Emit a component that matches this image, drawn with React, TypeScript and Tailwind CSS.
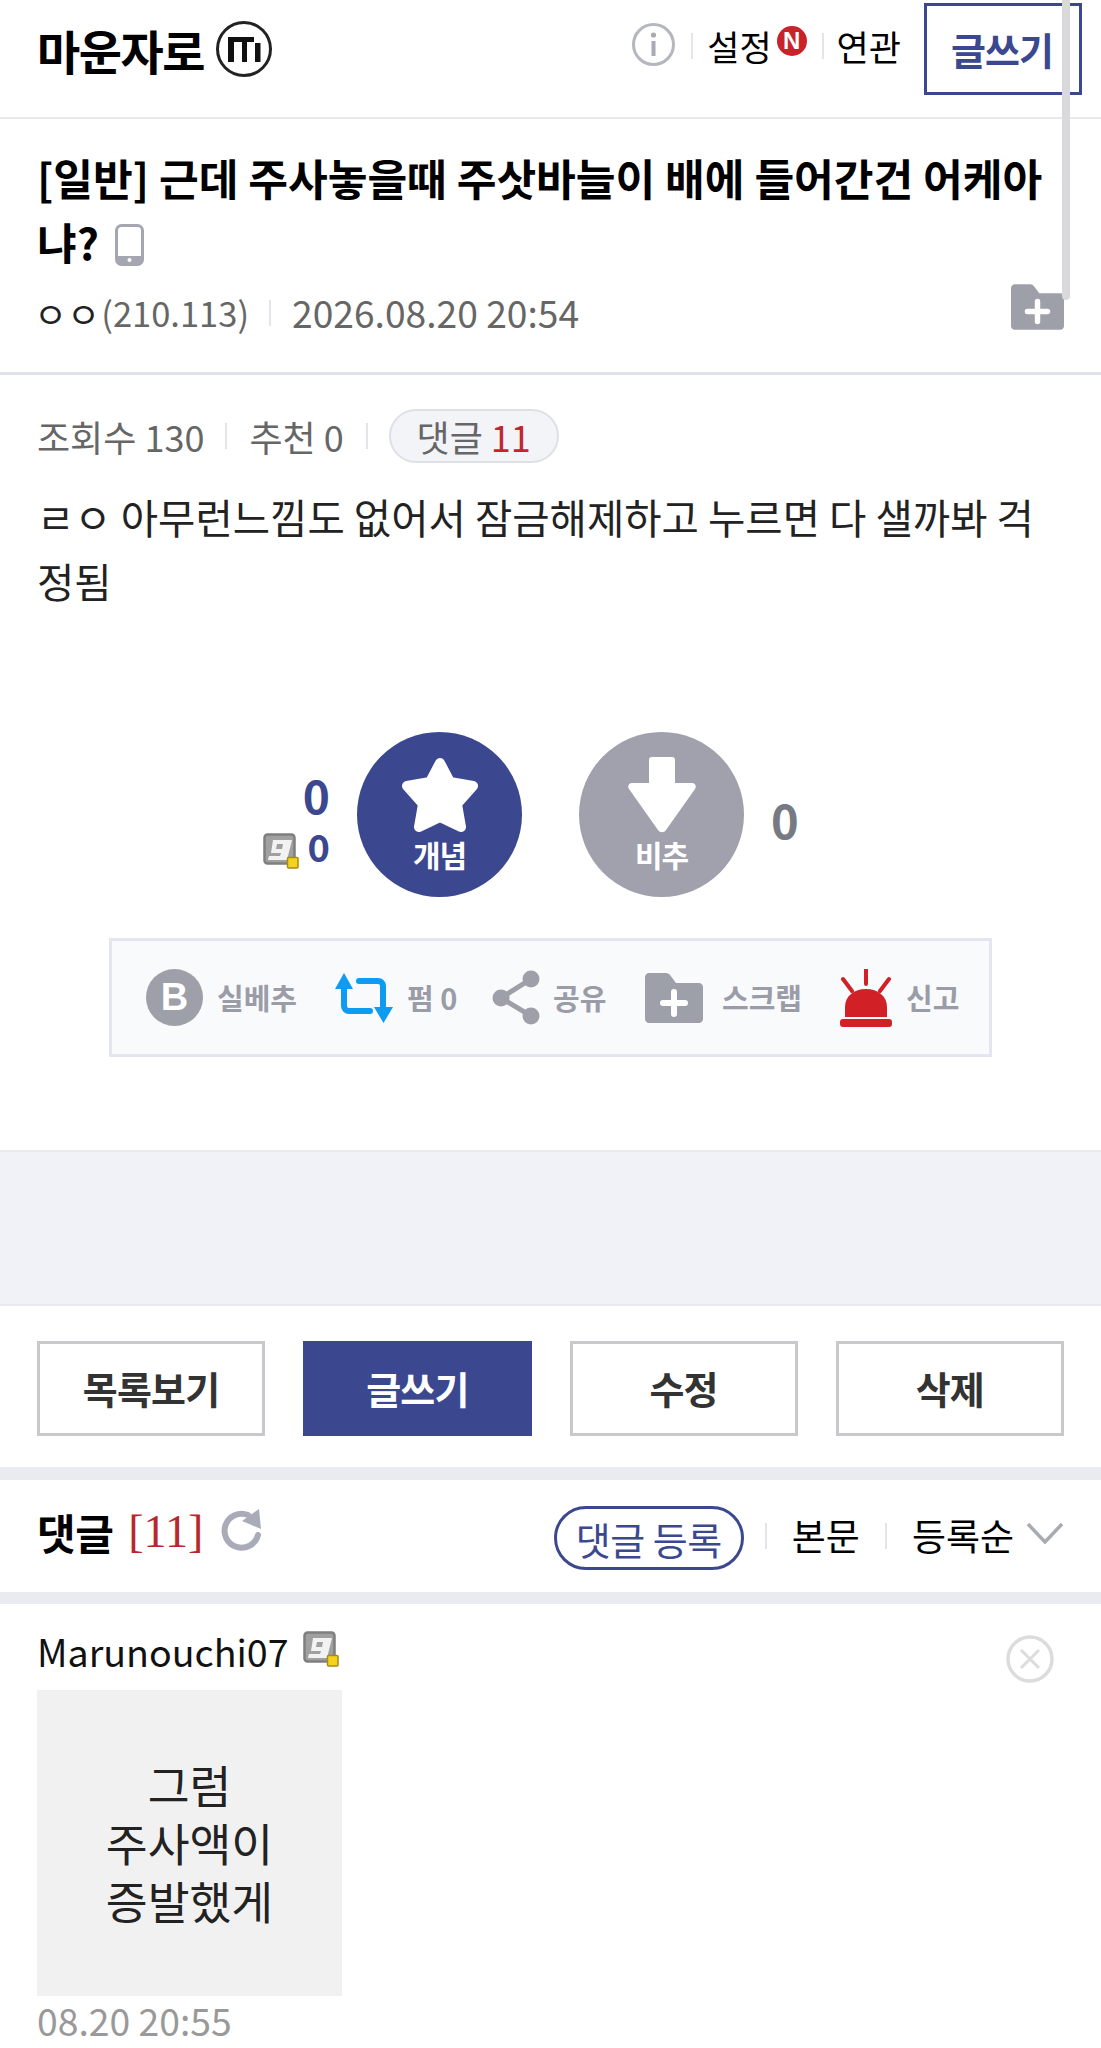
import React from "react";

const Sep = () => <span className="block w-[2px] h-[26px] bg-[#e3e5ea] shrink-0" />;

const Gcon = ({ className }: { className: string }) => (
  <svg viewBox="0 0 36 36" className={className}>
    <rect x="1.5" y="1.5" width="30" height="29" rx="3" fill="#a0a0a0" stroke="#7f7f7f" strokeWidth="2.5" />
    <path d="M10 7h19l-5 20H5l1-4h11l1-3H8zM14 11l-1 5h6l1-5z" fill="#f2f2f2" fillRule="evenodd" />
    <rect x="24.5" y="24.5" width="10.5" height="10.5" rx="1" fill="#f6d21c" stroke="#a58c14" strokeWidth="1.5" />
  </svg>
);

const FolderPlus = ({ className }: { className: string }) => (
  <svg viewBox="0 0 58 50" className={className}>
    <path d="M4 0h17c2 0 3 1 4 2l6 8h23c2 0 4 2 4 4v32c0 2-2 4-4 4H4c-2 0-4-2-4-4V4c0-2 2-4 4-4z" fill="#9d9fa9" />
    <path d="M29 19v22M18 30h22" stroke="#fff" strokeWidth="6" strokeLinecap="round" />
  </svg>
);

const ActionItem = ({ icon, label, className = "" }: { icon: React.ReactNode; label: string; className?: string }) => (
  <div className={`flex items-center shrink-0 ${className}`}>
    {icon}
    <span className="text-[29px] font-bold text-[#9a9ca7]">{label}</span>
  </div>
);

export default function App() {
  return (
    <div className="relative w-[1101px] h-[2048px] overflow-hidden bg-white text-black font-['Noto_Sans_CJK_KR','Noto_Sans',sans-serif]">
      <div className="absolute left-[1062px] top-0 w-[8px] h-[300px] rounded-b bg-[#d9d9dc] z-10" />

      <header className="h-[119px] border-b-2 border-[#e9e9ec] flex items-start pl-[37px] pr-[19px]">
        <span className="mt-[20px] text-[47px] leading-[60px] font-bold tracking-[-1.5px]">마운자로</span>
        <svg viewBox="0 0 56 56" className="w-[56px] h-[56px] mt-[21px] ml-[12px]">
          <circle cx="28" cy="28" r="26.5" fill="none" stroke="#222" strokeWidth="3" />
          <path d="M12 16h26v5H31v20h-5V21h-8v20h-6zM39 22h5.5v19H39z" fill="#111" />
        </svg>
        <div className="ml-auto flex items-center h-[62px] mt-[15px]">
          <svg viewBox="0 0 43 43" className="w-[43px] h-[43px] mb-[4px]">
            <circle cx="21.5" cy="21.5" r="20" fill="none" stroke="#b5b7c0" strokeWidth="3" />
            <circle cx="21.5" cy="12" r="2.6" fill="#a8aab4" />
            <rect x="19.5" y="18" width="4" height="15" fill="#a8aab4" />
          </svg>
          <span className="ml-[16px]"><Sep /></span>
          <span className="ml-[14px] text-[35px] leading-[48px]">설정</span>
          <span className="ml-[5px] mb-[10px] w-[30px] h-[30px] rounded-full bg-[#c8232a] text-white text-[24px] leading-[30px] font-bold text-center font-['Liberation_Sans',sans-serif]">N</span>
          <span className="ml-[15px]"><Sep /></span>
          <span className="ml-[13px] text-[35px] leading-[48px]">연관</span>
        </div>
        <div className="ml-[23px] mt-[3px] w-[158px] h-[92px] border-[3px] border-[#3b4890] flex items-center justify-center">
          <span className="text-[38px] font-bold text-[#3b4890] tracking-[-1px] pr-[2px] mb-[2px]">글쓰기</span>
        </div>
      </header>

      <section className="h-[256px] border-b-[3px] border-[#e1e3ea] pl-[37px] pr-[37px] pt-[26px]">
        <h1 className="text-[43.2px] leading-[64px] font-bold">
          [일반] 근데 주사놓을때 주삿바늘이 배에 들어간건 어케아냐?
          <svg viewBox="0 0 29 42" className="inline-block w-[29px] h-[42px] ml-[16px] align-[-6px]">
            <rect x="1.5" y="1.5" width="26" height="39" rx="5" fill="none" stroke="#a4a6b2" strokeWidth="3" />
            <path d="M2 32h25v5a4 4 0 0 1-4 4H6a4 4 0 0 1-4-4z" fill="#a4a6b2" />
            <circle cx="14.5" cy="36" r="2" fill="#fff" />
          </svg>
        </h1>
        <div className="mt-[15px] flex items-center h-[50px]">
          <span className="text-[36px] text-[#222] ml-[-3px]">ㅇㅇ</span>
          <span className="text-[34.5px] text-[#666] ml-[1px]">(210.113)</span>
          <span className="ml-[20px]"><Sep /></span>
          <span className="ml-[21px] text-[37.2px] text-[#666]">2026.08.20 20:54</span>
          <FolderPlus className="ml-auto w-[53px] h-[46px] mt-[-13px]" />
        </div>
      </section>

      <section className="pt-[34px] pl-[37px] pr-[37px]">
        <div className="flex items-center h-[54px] text-[36px] text-[#666]">
          <span>조회수 130</span>
          <span className="ml-[21px]"><Sep /></span>
          <span className="ml-[22px]">추천 0</span>
          <span className="ml-[22px]"><Sep /></span>
          <span className="ml-[21px] h-[54px] w-[170px] rounded-full bg-[#f3f4f7] border-2 border-[#dfe0e5] flex items-center justify-center text-[36px] leading-none">
            댓글&nbsp;<span className="text-[#c0272d]">11</span>
          </span>
        </div>
        <p className="mt-[22px] text-[40.6px] leading-[64px] text-[#222]">
          ㄹㅇ 아무런느낌도 없어서 잠금해제하고 누르면 다 샐까봐 걱정됨
        </p>
      </section>

      <section className="mt-[119px] flex justify-center items-stretch">
        <div className="flex-1 flex flex-col items-end pr-[27px]">
          <span className="mt-[36px] text-[46px] leading-[52px] font-bold text-[#3b4890]">0</span>
          <div className="flex items-center h-[52px]">
            <Gcon className="w-[36px] h-[36px] mr-[9px] mt-[10px]" />
            <span className="text-[38px] leading-[52px] font-bold text-[#3b4890]">0</span>
          </div>
        </div>
        <div className="w-[165px] h-[165px] rounded-full bg-[#3b4890] flex flex-col items-center">
          <svg viewBox="0 0 78 76" className="w-[78px] h-[76px] mt-[25px] shrink-0">
            <path d="M39 6l10 19 23 4-16 18 4 23-21-10-21 10 4-23L6 29l23-4z" fill="#fff" stroke="#fff" strokeWidth="10" strokeLinejoin="round" />
          </svg>
          <span className="text-[30px] leading-[30px] font-bold text-white mt-[6px] tracking-[-1px]">개념</span>
        </div>
        <div className="w-[165px] h-[165px] rounded-full bg-[#a0a1ad] ml-[57px] flex flex-col items-center">
          <svg viewBox="0 0 68 76" className="w-[68px] h-[76px] mt-[25px] shrink-0">
            <path d="M24 0h20c2 0 3 1 3 3v23h17c3 0 5 3 3 6L38 73c-2 3-6 3-8 0L1 32c-2-3 0-6 3-6h17V3c0-2 1-3 3-3z" fill="#fff" />
          </svg>
          <span className="text-[30px] leading-[30px] font-bold text-white mt-[6px] tracking-[-1px]">비추</span>
        </div>
        <div className="flex-1 pl-[27px]">
          <span className="block mt-[62px] text-[47px] leading-[50px] font-bold text-[#777983]">0</span>
        </div>
      </section>

      <section className="mt-[41px] mx-[109px] h-[119px] border-[3px] border-[#e3e6f0] bg-[#f9fafc] flex items-center pl-[34px]">
        <ActionItem
          className="w-[189px]"
          icon={
            <span className="w-[57px] h-[57px] rounded-full bg-[#9d9fa9] mr-[14px] flex items-center justify-center text-white text-[38px] font-bold font-['Liberation_Sans',sans-serif]">B</span>
          }
          label="실베추"
        />
        <ActionItem
          className="w-[157px]"
          icon={
            <svg viewBox="0 0 58 50" className="w-[58px] h-[50px] mr-[14px]">
              <path d="M9 14v19a5 5 0 0 0 5 5h21M24 8h19a5 5 0 0 1 5 5v22" fill="none" stroke="#0f9bf0" strokeWidth="6" strokeLinecap="round" />
              <path d="M9 0l9 16H0zM48.500 50l-9.500-16h19z" fill="#0f9bf0" />
            </svg>
          }
          label="펌 0"
        />
        <ActionItem
          className="w-[153px]"
          icon={
            <svg viewBox="0 0 48 55" className="w-[48px] h-[55px] mr-[13px]">
              <path d="M39 9L9 28l30 18" fill="none" stroke="#9d9fa9" strokeWidth="5" />
              <circle cx="39" cy="9" r="8.500" fill="#9d9fa9" />
              <circle cx="9" cy="28" r="8.500" fill="#9d9fa9" />
              <circle cx="39" cy="46" r="8.500" fill="#9d9fa9" />
            </svg>
          }
          label="공유"
        />
        <ActionItem className="w-[195px]" icon={<FolderPlus className="w-[58px] h-[50px] mr-[19px]" />} label="스크랩" />
        <ActionItem
          icon={
            <svg viewBox="0 0 52 58" className="w-[52px] h-[58px] mr-[14px]">
              <path d="M5 48V38c0-11 9-18 21-18s21 7 21 18v10z" fill="#d12127" />
              <rect x="0" y="50" width="52" height="8" rx="3" fill="#d12127" />
              <path d="M26 1v14M3 10l9 12M49 10l-9 12" stroke="#d12127" strokeWidth="4" strokeLinecap="round" />
            </svg>
          }
          label="신고"
        />
      </section>

      <div className="mt-[93px] h-[156px] bg-[#f0f2f7] border-y-2 border-[#e8eaf0]" />

      <section className="px-[37px] pt-[35px] pb-[31px] grid grid-cols-4 gap-[38px]">
        {["목록보기", "글쓰기", "수정", "삭제"].map((t) => (
          <div
            key={t}
            className={
              t === "글쓰기"
                ? "h-[95px] bg-[#3b4890] text-white flex items-center justify-center text-[38px] font-bold tracking-[-0.8px] pb-[3px]"
                : "h-[95px] border-[3px] border-[#c9c9cd] text-[#333] flex items-center justify-center text-[38px] font-bold tracking-[-0.8px] pb-[3px]"
            }
          >
            {t}
          </div>
        ))}
      </section>

      <div className="h-[13px] bg-[#e9ebf1]" />

      <section className="h-[112px] flex items-center pl-[37px] pr-[37px]">
        <span className="text-[42px] font-bold tracking-[-0.5px] mb-[10px]">댓글</span>
        <span className="ml-[15px] text-[46px] text-[#b9272e] font-['Liberation_Serif',serif] mb-[10px]">[11]</span>
        <svg viewBox="0 0 42 44" className="w-[42px] h-[44px] ml-[18px] mb-[10px]">
          <path d="M27 6A17 17 0 1 0 37 26" fill="none" stroke="#a9abb8" strokeWidth="6" strokeLinecap="round" />
          <path d="M38 0l2 20-19-8z" fill="#a9abb8" />
        </svg>
        <div className="ml-auto flex items-center">
          <span className="w-[190px] h-[64px] mt-[4px] rounded-full border-[3px] border-[#3b4890] text-[#3b4890] text-[38px] tracking-[-0.5px] flex items-center justify-center">댓글 등록</span>
          <span className="ml-[21px]"><Sep /></span>
          <span className="ml-[25px] text-[37px]">본문</span>
          <span className="ml-[25px]"><Sep /></span>
          <span className="ml-[25px] text-[37px]">등록순</span>
          <svg viewBox="0 0 38 22" className="w-[38px] h-[22px] ml-[12px] mb-[6px]">
            <path d="M2 2l17 18L36 2" fill="none" stroke="#a9abb3" strokeWidth="3.5" />
          </svg>
        </div>
      </section>

      <div className="h-[12px] bg-[#e9ebf1]" />

      <section className="px-[37px] pt-[17px]">
        <div className="flex items-center h-[60px]">
          <span className="text-[37.6px] leading-[60px] text-[#111]">Marunouchi07</span>
          <Gcon className="w-[36px] h-[36px] ml-[14px] mb-[4px]" />
          <svg viewBox="0 0 48 48" className="w-[48px] h-[48px] ml-auto mr-[10px] mt-[16px]">
            <circle cx="24" cy="24" r="22" fill="none" stroke="#dcdcde" strokeWidth="3.500" />
            <path d="M15 15l18 18M33 15L15 33" stroke="#dcdcde" strokeWidth="3" />
          </svg>
        </div>
        <div className="mt-[9px] w-[305px] h-[306px] bg-[#f1f1f1] flex items-center justify-center text-center text-[45.5px] leading-[58px] text-[#222]">
          <div className="mb-[2px]">그럼<br />주사액이<br />증발했게</div>
        </div>
        <div className="mt-[-1px] text-[37.3px] leading-[50px] text-[#999]">08.20 20:55</div>
      </section>
    </div>
  );
}
